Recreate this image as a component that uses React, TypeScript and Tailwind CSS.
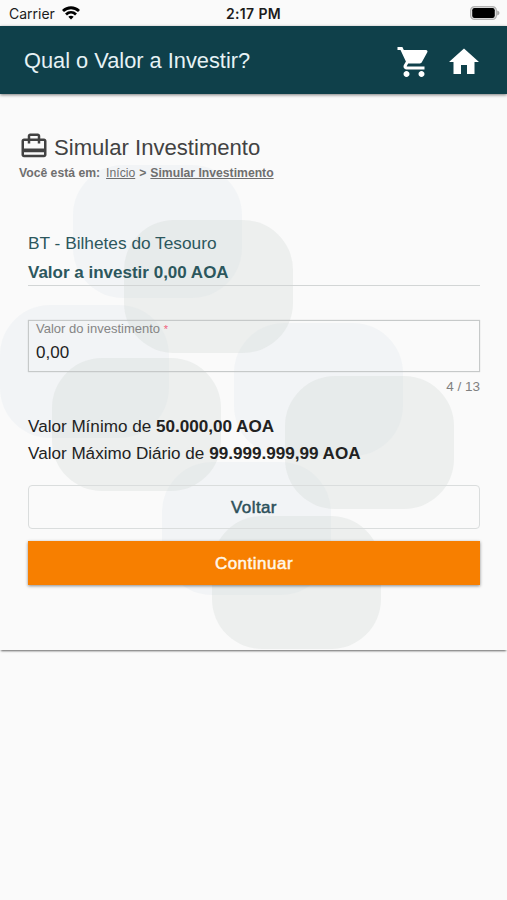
import type { ReactNode } from 'react';
import { MdCardTravel, MdHome, MdShoppingCart } from 'react-icons/md';

const BLOBS = [
  { x: 73, y: 71, fill: '#dfe6ec' },
  { x: 0, y: 211, fill: '#dfe6ec' },
  { x: 234, y: 229, fill: '#dfe6ec' },
  { x: 162, y: 368, fill: '#dfe6ec' },
  { x: 124, y: 126, fill: '#cdd5d2' },
  { x: 52, y: 264, fill: '#cdd5d2' },
  { x: 285, y: 282, fill: '#cdd5d2' },
  { x: 212, y: 422, fill: '#cdd5d2' },
] as const;

function StatusBar() {
  return (
    <div className="flex h-[26px] items-center justify-between pl-[9px] pr-[7px] font-['Inter',sans-serif] text-[14px] text-[#1c1c1c]">
      <div className="flex flex-1 items-center gap-[7px]">
        <span>Carrier</span>
        <svg width="18" height="14" viewBox="0 0 18 14" fill="none" stroke="#000" strokeWidth="2.8">
          <path d="M1 5.1C5.6.6 12.4.6 17 5.1" />
          <path d="M4 8.4c2.9-2.7 7.1-2.7 10 0" />
          <path d="M9 13.6 6.3 10.8c1.6-1.4 3.8-1.4 5.4 0z" fill="#000" stroke="none" />
        </svg>
      </div>
      <span className="relative right-px font-semibold tracking-[0.35px]">2:17 PM</span>
      <div className="flex flex-1 justify-end">
        <svg width="30" height="14" viewBox="0 0 30 14">
          <rect x="0.7" y="0.7" width="25.6" height="12.6" rx="3.8" fill="none" stroke="#b4b4b4" strokeWidth="1.4" />
          <rect x="2.2" y="2" width="22.6" height="10" rx="2.2" fill="#000" />
          <path d="M27.2 4.5c3 .9 3 4.1 0 5z" fill="#a9a9a9" />
        </svg>
      </div>
    </div>
  );
}

function Header() {
  return (
    <header className="relative z-10 flex h-[68px] items-center justify-between bg-[#0f404a] pl-6 pr-[25px] shadow-[0_1px_3px_rgba(0,0,0,0.5)]">
      <h1 className="pt-[2px] text-[21.8px] leading-none text-[#e6f2f5]">Qual o Valor a Investir?</h1>
      <div className="flex items-center gap-[15px] pt-1">
        <MdShoppingCart size={36} color="#fff" className="relative left-px" />
        <MdHome size={36} color="#fff" />
      </div>
    </header>
  );
}

function Backdrop() {
  return (
    <svg className="absolute inset-0" width="507" height="556" viewBox="0 0 507 556" aria-hidden="true">
      {BLOBS.map((b) => (
        <rect key={`${b.x}-${b.y}`} x={b.x} y={b.y} width="169" height="133" rx="50" fill={b.fill} opacity="0.28" />
      ))}
    </svg>
  );
}

function Limit({ label, children }: { label: string; children: ReactNode }) {
  return (
    <p className="text-[17.1px] leading-[27px] text-[#222]">
      {label} <b>{children}</b>
    </p>
  );
}

export default function App() {
  return (
    <div className="h-[900px] w-[507px] overflow-hidden bg-[#fafafa] font-['Liberation_Sans',Arial,sans-serif]">
      <StatusBar />
      <Header />

      <main className="relative h-[556px] bg-[#fafafa] shadow-[0_2px_2px_-1px_rgba(0,0,0,0.6)]">
        <Backdrop />
        <div className="relative pt-[35px]">
          {/* Page title and breadcrumb */}
          <div className="flex items-center pl-[19px] text-[#424242]">
            <MdCardTravel size={30} />
            <h2 className="pl-[5px] pt-[5px] text-[22.1px] leading-7">Simular Investimento</h2>
          </div>
          <p className="flex gap-1 pl-[19px] pt-[3px] text-[12.2px] font-bold leading-4 text-[#6f6f6f]">
            <span className="pr-[2px]">Você está em:</span>
            <a className="font-normal underline">Início</a>
            <span>&gt;</span>
            <a className="underline">Simular Investimento</a>
          </p>

          <div className="pl-7 pr-[27px]">
            <section className="mt-[48px] border-b border-[#d2d5d5] text-[17px] text-[#2c575d]">
              <p className="text-[17.3px] leading-[29px]">BT - Bilhetes do Tesouro</p>
              <p className="h-[27px] pt-px font-bold leading-[27px]">Valor a investir 0,00 AOA</p>
            </section>

            <div className="mt-[34px] h-[52px] border-[1.5px] border-[#c6c9c9] pl-[7px] shadow-[0_0_1px_rgba(0,0,0,0.2)]">
              <p className="text-[13px] leading-4 text-[#858585]">
                Valor do investimento <span className="text-[11px] text-[#f0617c]">*</span>
              </p>
              <p className="pt-[4px] text-[17px] leading-6 text-[#222]">0,00</p>
            </div>
            <p className="pt-[5px] text-right text-[13.5px] leading-5 text-[#808080]">4 / 13</p>

            <div className="mt-[16px]">
              <Limit label="Valor Mínimo de">50.000,00 AOA</Limit>
              <Limit label="Valor Máximo Diário de">99.999.999,99 AOA</Limit>
            </div>

            <button
              type="button"
              className="mt-[18px] h-11 w-full rounded-[4px] border border-[#dadddd] pt-px text-[17px] tracking-[0.4px] text-[#2c505a] [-webkit-text-stroke:0.5px]"
            >
              Voltar
            </button>
            <button
              type="button"
              className="mt-3 h-11 w-full bg-[#f77f00] pt-px text-[17px] tracking-[0.5px] text-[#fff7e8] shadow-[0_1px_3px_rgba(0,0,0,0.45)] [-webkit-text-stroke:0.5px]"
            >
              Continuar
            </button>
          </div>
        </div>
      </main>
    </div>
  );
}
